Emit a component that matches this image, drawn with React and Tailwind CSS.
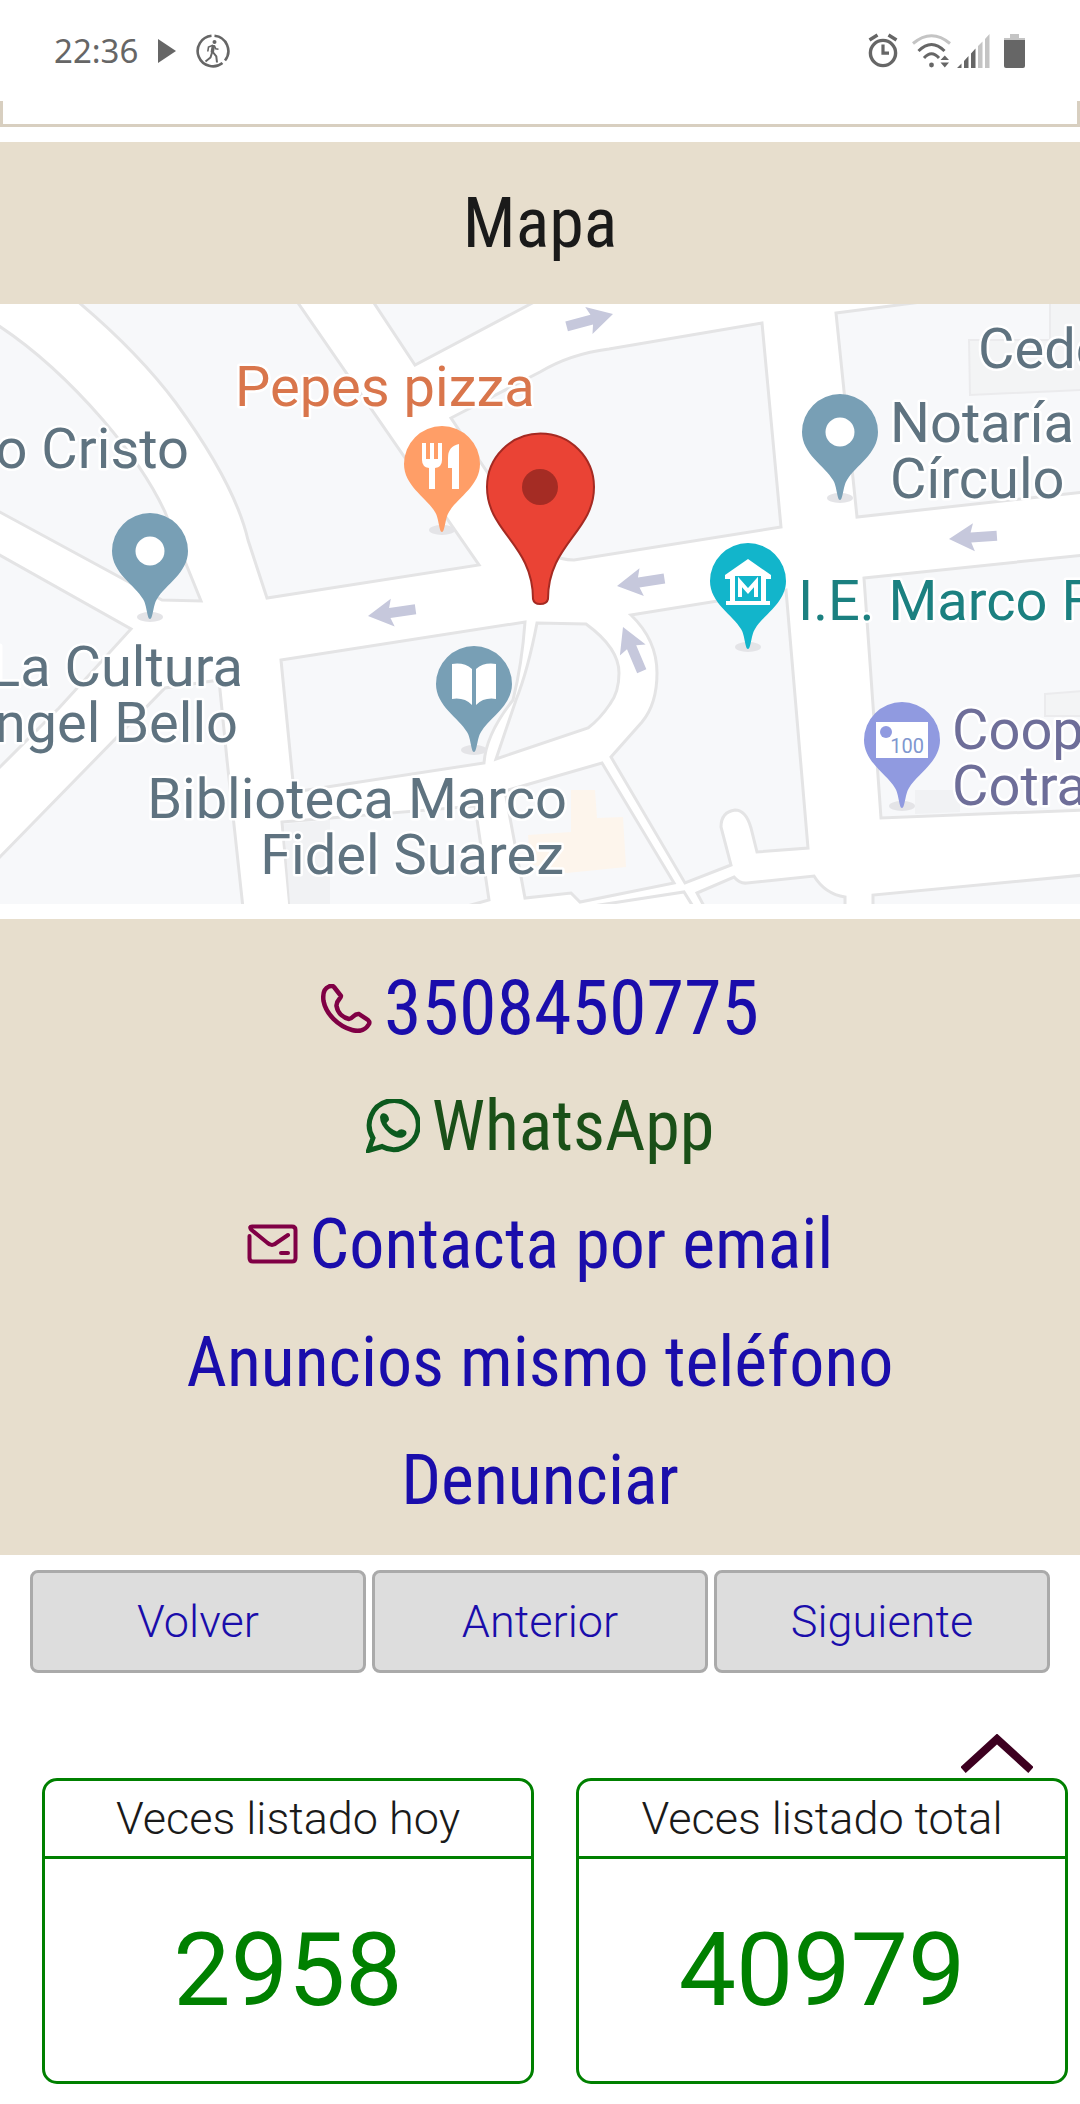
import React from 'react';

// Status bar icons
const PlayIcon = () => (
  <svg viewBox="0 0 18 24" className="w-[18px] h-6" fill="#666666" aria-hidden="true">
    <path d="M0 0 L18 12 L0 24 Z" />
  </svg>
);

const WalkIcon = () => (
  <svg viewBox="0 0 34 34" className="w-[34px] h-[34px]" fill="none" stroke="#666666" aria-hidden="true">
    <path d="M18.5 1.8 A15.3 15.3 0 0 1 29 26.5" strokeWidth="2.6" />
    <path d="M26.5 29 A15.3 15.3 0 1 1 15.5 1.8" strokeWidth="2.6" />
    <circle cx="18.5" cy="8" r="2" fill="#666666" stroke="none" />
    <path d="M17.5 11 L16.2 18.5" strokeWidth="3.4" />
    <path d="M17 11.2 L12.5 13 L11.8 17.5 M18.5 12 L19.8 14.8 L22.5 15.2" strokeWidth="1.6" />
    <path d="M16.2 18 L14.5 23.5 L9.5 27.5 M16.8 18 L20.3 22.5 L21 28.5" strokeWidth="2" />
  </svg>
);

const AlarmIcon = () => (
  <svg viewBox="0 0 30 35" className="w-[30px] h-[35px]" fill="none" stroke="#666666" aria-hidden="true">
    <circle cx="15" cy="20" r="12.6" strokeWidth="3.4" />
    <path d="M1.5 7 L9.5 2 M28.5 7 L20.5 2" strokeWidth="3.4" />
    <path d="M15 11.5 V20.2 H21" strokeWidth="3.2" />
  </svg>
);

const WifiIcon = () => (
  <svg viewBox="0 0 39 34" className="w-[39px] h-[34px]" fill="none" strokeWidth="3" aria-hidden="true">
    <path d="M1 9.5 Q19.5 -6 38 9.5" stroke="#c4c4c4" />
    <path d="M6.5 17 Q19.5 4 32.5 17" stroke="#666666" />
    <path d="M12 24 Q19.5 15.5 27 24" stroke="#666666" />
    <circle cx="19.5" cy="31" r="2.4" fill="#666666" />
    <path d="M28.5 26 H37 L32.8 21.5 Z M28.5 28.5 H37 L32.8 33.5 Z" fill="#666666" />
  </svg>
);

const SignalIcon = () => (
  <svg viewBox="0 0 33 34" className="w-[33px] h-[34px]" aria-hidden="true">
    <path d="M0 34 L4.5 29.5 V34 Z M7 34 V27 L11.5 22 V34 Z M14 34 V19.5 L18.5 14.5 V34 Z" fill="#666666" />
    <path d="M21 34 V12 L25.5 7.5 V34 Z M28 34 V5 L32.5 0 V34 Z" fill="#c4c4c4" />
  </svg>
);

const BatteryIcon = () => (
  <svg viewBox="0 0 21 34" className="w-[21px] h-[34px]" aria-hidden="true">
    <path d="M6 0 H15 V4 H21 V7 H0 V4 H6 Z" fill="#c4c4c4" />
    <path d="M0 6 H21 V32 Q21 34 19 34 H2 Q0 34 0 32 Z" fill="#666666" />
  </svg>
);

// Contact icons
const PhoneIcon = () => (
  <svg viewBox="0 0 51 49" className="w-[51px] h-[49px]" fill="none" stroke="#800045" strokeWidth="4.5" strokeLinejoin="round" aria-hidden="true">
    <path d="M13 3 L20 12 C20 15 15 16 15.5 22 C17 30 23 34 28 35 C32 35 33 29 38 30 L47 36 Q49 38 48 40 C44 47 38 48 31 46 C17 42 5 30 2.5 17 C1.5 9 4 4 8 2.5 Q11 1 13 3 Z" />
  </svg>
);

const WhatsAppIcon = () => (
  <svg viewBox="0 0 54 54" className="w-[54px] h-[54px]" aria-hidden="true">
    <path d="M2.5 51.5 L7 39 A24.5 24.5 0 1 1 16 47.5 Z" fill="none" stroke="#0c5a1e" strokeWidth="5" />
    <path d="M14 18 Q15 13 19 14.5 Q23 16 23 21 L20.5 24 Q24 30 31 32.5 Q35 28.5 40 32 Q42 36 36.5 38.5 Q30 40 23 34 Q14 26 14 18 Z" fill="#0c5a1e" />
  </svg>
);

const MailIcon = () => (
  <svg viewBox="0 0 51 40" className="w-[51px] h-10" fill="none" stroke="#800045" strokeWidth="4" strokeLinecap="round" strokeLinejoin="round" aria-hidden="true">
    <path d="M2.5 12 V34 Q2.5 37.5 6 37.5 H45 Q48.5 37.5 48.5 34 V6 Q48.5 2.5 45 2.5 H5 Q2 2.5 4 5.5 L20 18.5 Q25 23.5 30 18.5 L41 11" />
    <path d="M34 29 H41" />
  </svg>
);

// Small teardrop marker, (x, y) is the center of its head
const Pin = ({ x, y, color, children }) => (
  <g transform={`translate(${x} ${y})`}>
    <ellipse cx="0" cy="66" rx="13" ry="5" fill="#e4e4e7" />
    <path
      d="M0 68 C-3 68 -3 54 -7 48 C-15 34 -38 22 -38 0 A38 38 0 0 1 38 0 C38 22 15 34 7 48 C3 54 3 68 0 68 Z"
      fill={color}
    />
    {children}
  </g>
);

// One-way street arrow, (x, y) is the tip
const Arrow = ({ x, y, angle }) => (
  <path
    d="M0 0 L-25 -14 L-22 -5 H-48 V5 H-22 L-25 14 Z"
    transform={`translate(${x} ${y}) rotate(${angle})`}
    fill="#c6c8dc"
  />
);

const blocks = [
  'M-4 20 Q50 55 103 116 Q145 165 165 208 L201 297 L162 296 L-4 206 Z',
  'M-4 249 L131 325 L59 404 L-4 467 Z',
  'M-4 557 L165 384 L219 376 L227 456 L243 604 H-4 Z',
  'M76 -4 Q138 48 176 99 Q235 180 248 236 L267 294 L479 261 L296 -4 Z',
  'M372 -4 L415 61 L538 -4 Z',
  'M451 114 L540 68 Q570 50 609 45 L762 19 L781 223 L574 256 Q548 256 530 232 Z',
  'M836 9 L929 -3 L1084 -4 V188 L857 213 Z',
  'M864 274 L1084 251 V506 L881 514 Z',
  'M631 311 L786 286 L808 544 L757 548 L751 524 Q746 506 735 506 Q721 508 721 523 L731 561 L685 579 L611 453 L642 418 Q657 400 657 369 Q657 336 631 311 Z',
  'M537 319 L586 320 Q619 344 619 369 Q619 388 610 400 Q600 415 588 424 L496 455 L516 396 Q528 366 537 319 Z',
  'M281 356 L525 318 Q522 360 513 396 Q486 430 484 459 L294 488 Z',
  'M282 518 L475 502 L489 596 L460 604 H290 Z',
  'M505 487 L602 459 L674 579 L580 598 L571 589 L525 594 Z',
  'M697 589 L734 573 Q740 580 747 579 L814 572 Q825 590 845 593 V604 H705 Z',
  'M873 604 V591 L1084 571 V604 Z',
];

const labels = [
  { text: 'Pepes pizza', x: 235, y: 102, color: '#d9764c' },
  { text: 'o Cristo', x: 189, y: 164, anchor: 'end' },
  { text: 'Cede', x: 978, y: 64 },
  { text: 'Notaría', x: 890, y: 138 },
  { text: 'Círculo', x: 890, y: 194 },
  { text: 'I.E. Marco Fidel', x: 798, y: 316, color: '#1b8080' },
  { text: 'La Cultura', x: 243, y: 382, anchor: 'end' },
  { text: 'ngel Bello', x: 238, y: 438, anchor: 'end' },
  { text: 'Biblioteca Marco', x: 567, y: 514, anchor: 'end' },
  { text: 'Fidel Suarez', x: 564, y: 570, anchor: 'end' },
  { text: 'Coop', x: 952, y: 445, color: '#6e6e99' },
  { text: 'Cotra', x: 952, y: 501, color: '#6e6e99' },
];

// Street map
const StreetMap = () => (
  <svg viewBox="0 0 1080 600" className="block w-full bg-white" role="img" aria-label="Mapa">
    <g fill="#f7f8fa" stroke="#e4e4e5" strokeWidth="3">
      {blocks.map((d, idx) => (
        <path key={idx} d={d} />
      ))}
    </g>
    <path d="M1050 -2 V36 H969 L970 91 L1082 86 V-2 Z M1045 390 L1082 387 V412 H1045 Z" fill="#f3f4f5" stroke="#ebebed" strokeWidth="2" />
    <path d="M284 520 L330 516 V600 H290 Z M915 486 H960 V508 L915 510 Z" fill="#f1f2f4" />
    <path d="M571 486 H595 L597 514 L623 513 L626 563 L567 569 L530 560 L528 531 L571 528 Z" fill="#fdf5ec" />
    <path d="M580 604 L684 588 L694 604" fill="none" stroke="#e4e4e5" strokeWidth="3" />

    <Arrow x={613} y={10} angle={-15} />
    <Arrow x={368} y={312} angle={172} />
    <Arrow x={617} y={282} angle={171} />
    <Arrow x={949} y={235} angle={176} />
    <Arrow x={623} y={323} angle={-113} />

    <g
      fontFamily="Roboto, sans-serif"
      fontSize="56"
      stroke="#ffffff"
      strokeWidth="5"
      strokeLinejoin="round"
      paintOrder="stroke"
    >
      {labels.map((label) => (
        <text key={label.text} x={label.x} y={label.y} fill={label.color || '#5f7380'} textAnchor={label.anchor || 'start'}>
          {label.text}
        </text>
      ))}
    </g>

    <Pin x={150} y={247} color="#789fb5">
      <circle r="14.5" fill="#ffffff" />
    </Pin>
    <Pin x={840} y={128} color="#789fb5">
      <circle r="14.5" fill="#ffffff" />
    </Pin>
    <Pin x={442} y={160} color="#ff9e67">
      <path d="M-20 -21 V-4 Q-20 3 -13 4 V25 H-7 V4 Q0 3 0 -4 V-21 H-4 V-5 H-8 V-21 H-12 V-5 H-16 V-21 Z" fill="#ffffff" />
      <path d="M17 -20 Q6 -18 6 -6 V4 H10 V25 H17 Z" fill="#ffffff" />
    </Pin>
    <Pin x={748} y={277} color="#12b5cb">
      <path d="M0 -22 L23 -6 V-2 H18 V20 H22 V24 H-22 V20 H-18 V-2 H-23 V-6 Z" fill="#ffffff" />
      <path d="M-13 -5 H13 V20 H-13 Z" fill="#12b5cb" />
      <path d="M-8 16 V1 L0 10 L8 1 V16" fill="none" stroke="#ffffff" strokeWidth="4" />
    </Pin>
    <Pin x={474} y={380} color="#789fb5">
      <path d="M-22 -20 Q-10 -22 -2 -15 V21 Q-10 13 -22 15 Z M22 -20 Q10 -22 2 -15 V21 Q10 13 22 15 Z" fill="#ffffff" />
    </Pin>
    <Pin x={902} y={436} color="#909ae0">
      <path d="M-26 -18 H26 V18 H-26 Z" fill="#ffffff" />
      <circle cx="-16" cy="-8" r="6" fill="#909ae0" />
      <text x="22" y="13" textAnchor="end" fontFamily="Roboto, sans-serif" fontSize="20" fill="#7f97cf">100</text>
    </Pin>

    {/* Ad location */}
    <path
      d="M533 295 C533 240 487 228 487 183 A53 53 0 0 1 594 183 C594 228 548 240 548 295 Q547 300 540 300 Q534 300 533 295 Z"
      fill="#ea4335"
      stroke="#a52a22"
      strokeWidth="2"
    />
    <circle cx="540" cy="183" r="18" fill="#a52c24" />
  </svg>
);

const contacts = [
  { text: '3508450775', href: 'tel:3508450775', icon: <PhoneIcon />, style: 'text-[76px] text-[#1a0dab]' },
  { text: 'WhatsApp', href: '#whatsapp', icon: <WhatsAppIcon />, style: 'text-[70px] text-[#1a5018]' },
  { text: 'Contacta por email', href: '#email', icon: <MailIcon />, style: 'text-[70px] text-[#1a0dab]' },
  { text: 'Anuncios mismo teléfono', href: '#anuncios', style: 'text-[70px] text-[#1a0dab]' },
  { text: 'Denunciar', href: '#denunciar', style: 'text-[70px] text-[#1a0dab]' },
];

const stats = [
  { title: 'Veces listado hoy', value: '2958' },
  { title: 'Veces listado total', value: '40979' },
];

const App = () => {
  return (
    <div className="bg-white text-[#1a1a1a] font-[Roboto,sans-serif]">
      {/* Status Bar */}
      <header className="flex items-center justify-between h-[101px] pl-[54px] pr-[55px]">
        <div className="flex items-center">
          <span className="text-[33px] text-[#666666] font-['Noto_Sans',sans-serif] mr-5">22:36</span>
          <PlayIcon />
          <span className="ml-5">
            <WalkIcon />
          </span>
        </div>
        <div className="flex items-center">
          <AlarmIcon />
          <span className="ml-3.5">
            <WifiIcon />
          </span>
          <span className="ml-1.5">
            <SignalIcon />
          </span>
          <span className="ml-3.5">
            <BatteryIcon />
          </span>
        </div>
      </header>

      <main>
        {/* End of the previous box */}
        <div className="h-[26px] border-x-[3px] border-b-[3px] border-[#d8cfc0]" />

        {/* Map Section */}
        <section className="mt-[15px]">
          <h2 className="flex items-center justify-center h-[162px] bg-[#e7decd] text-[70px] font-['Roboto_Condensed',sans-serif]">
            Mapa
          </h2>
          <StreetMap />
        </section>

        {/* Contact Section */}
        <section className="mt-[15px] bg-[#e7decd] pt-[30px] pb-4 font-['Roboto_Condensed',sans-serif]">
          {contacts.map((item) => (
            <a
              key={item.text}
              href={item.href}
              className={`flex items-center justify-center gap-3 h-[118px] ${item.style}`}
            >
              {item.icon}
              {item.text}
            </a>
          ))}
        </section>

        {/* Navigation */}
        <nav className="grid grid-cols-3 gap-1.5 px-[30px] mt-[15px]">
          {['Volver', 'Anterior', 'Siguiente'].map((label) => (
            <button
              key={label}
              type="button"
              className="h-[103px] rounded-lg border-[3px] border-[#aaaaaa] bg-[#dddddd] text-[45px] text-[#1a0dab] font-[350]"
            >
              {label}
            </button>
          ))}
        </nav>

        {/* Back to top */}
        <div className="flex justify-end items-end h-[105px] pr-[47px] pb-1">
          <button type="button" aria-label="Subir">
            <svg viewBox="0 0 72 40" className="block w-[72px] h-10" fill="none" stroke="#3d0020" strokeWidth="8">
              <path d="M2 36 L36 5 L70 36" />
            </svg>
          </button>
        </div>

        {/* Stats */}
        <section className="grid grid-cols-2 gap-[42px] pl-[42px] pr-3 pb-5">
          {stats.map((stat) => (
            <div key={stat.title} className="rounded-[15px] border-[3px] border-[#008000] text-center">
              <h3 className="h-[78px] border-b-[3px] border-[#008000] text-[45px] leading-[76px] font-[350]">{stat.title}</h3>
              <p className="py-14 text-[102px] leading-[110px] text-[#008000]">{stat.value}</p>
            </div>
          ))}
        </section>
      </main>
    </div>
  );
};

export default App;
